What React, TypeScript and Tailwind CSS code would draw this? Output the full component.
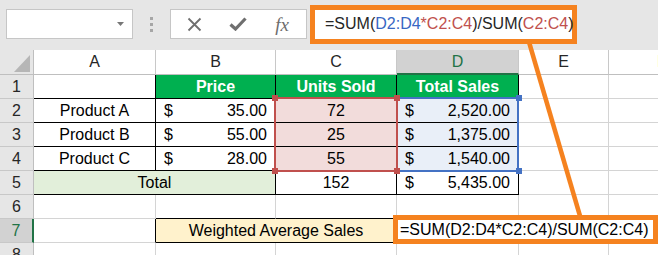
import React from 'react';

// border colour tokens for the sheet cells (right / bottom edges)
const rG = 'border-r-[#d4d4d4]';
const rK = 'border-r-black';
const bG = 'border-b-[#d4d4d4]';
const bK = 'border-b-black';

interface CellProps {
  r?: string;
  b?: string;
  className?: string;
  children?: React.ReactNode;
}

const Cell: React.FC<CellProps> = ({ r = rG, b = bG, className = '', children }) => (
  <div className={`flex h-[24px] items-center border-r border-b px-[8px] ${r} ${b} ${className}`}>{children}</div>
);

const Money: React.FC<{ value: string; className?: string }> = ({ value, className = '' }) => (
  <Cell r={rK} b={bK} className={`justify-between ${className}`}>
    <span>$</span>
    <span>{value}</span>
  </Cell>
);

const RowHead: React.FC<{ n: number; active?: boolean }> = ({ n, active }) => (
  <div
    className={`flex h-[24px] items-center justify-center border-b border-b-[#c8c8c8] ${
      active
        ? 'border-r-2 border-r-[#217346] bg-[#d2d2d2] text-[#217346]'
        : 'border-r border-r-[#bfbfbf] bg-[#e6e6e6] text-[#262626]'
    }`}
  >
    {n}
  </div>
);

const ColHead: React.FC<{ label: string; active?: boolean }> = ({ label, active }) => (
  <div
    className={`flex h-[25px] items-center justify-center border-r border-r-[#c8c8c8] ${
      active ? 'border-b-2 border-b-[#217346] bg-[#d2d2d2] text-[#217346]' : 'border-b border-b-[#bfbfbf] text-[#262626]'
    }`}
  >
    {label}
  </div>
);

const Handle: React.FC<{ x: number; y: number; color: string }> = ({ x, y, color }) => (
  <div className="absolute h-[6px] w-[6px]" style={{ left: x - 3, top: y - 3, backgroundColor: color }} />
);

const products = [
  { name: 'Product A', price: '35.00', units: '72', total: '2,520.00' },
  { name: 'Product B', price: '55.00', units: '25', total: '1,375.00' },
  { name: 'Product C', price: '28.00', units: '55', total: '1,540.00' },
];

export default function App() {
  return (
    <div className="relative h-[255px] w-[658px] overflow-hidden bg-[#e6e6e6] font-['Liberation_Sans',Arial,sans-serif] text-[16px] text-black">
      {/* formula bar */}
      <div className="flex h-[50px] items-center pb-[2px] pl-[6px]">
        <div className="flex h-[30px] w-[127px] items-center justify-end border border-[#c6c6c6] bg-white pr-[8px]">
          <svg width="7" height="4" viewBox="0 0 7 4">
            <path d="M0 0H7L3.5 4Z" fill="#777" />
          </svg>
        </div>
        <div className="ml-[17px] flex flex-col gap-[3px]">
          <div className="h-[3px] w-[3px] bg-[#a6a6a6]" />
          <div className="h-[3px] w-[3px] bg-[#a6a6a6]" />
          <div className="h-[3px] w-[3px] bg-[#a6a6a6]" />
        </div>
        <div className="ml-[17px] flex h-[30px] w-[137px] items-center border border-[#c6c6c6] bg-white pl-[1px]">
          <div className="flex w-[44px] justify-center">
            <svg width="15" height="15" viewBox="0 0 15 15">
              <path d="M1.5 1.5L13.5 13.5M13.5 1.5L1.5 13.5" stroke="#6f6f6f" strokeWidth="1.8" />
            </svg>
          </div>
          <div className="flex w-[44px] justify-center">
            <svg width="18" height="14" viewBox="0 0 18 14">
              <path d="M1.5 7.5L6.5 12L16.5 1.5" stroke="#6f6f6f" strokeWidth="3.2" fill="none" />
            </svg>
          </div>
          <div className="flex w-[44px] justify-center font-['Liberation_Serif',serif] text-[19px] italic leading-none text-[#6d6d6d]">
            fx
          </div>
        </div>
        <div className="ml-[3px] flex h-[39px] w-[267px] items-center border-[5px] border-[#f5821f] bg-white pl-[10px] text-[16px] text-[#262626]">
          <span>=SUM(</span>
          <span className="text-[#3867c3]">D2:D4</span>
          <span className="text-[#c0504d]">*C2:C4</span>
          <span>)/SUM(</span>
          <span className="text-[#c0504d]">C2:C4</span>
          <span>)</span>
        </div>
      </div>

      {/* sheet */}
      <div className="grid w-[764px] grid-cols-[34px_122px_120px_121px_122px_90px_155px] bg-white">
        <div className="relative h-[25px] border-r border-b border-r-[#bfbfbf] border-b-[#bfbfbf] bg-[#e6e6e6]">
          <svg className="absolute right-[3px] bottom-[2px]" width="16" height="17" viewBox="0 0 16 17">
            <path d="M16 0V17H0Z" fill="#b6b6b6" />
          </svg>
        </div>
        <ColHead label="A" />
        <ColHead label="B" />
        <ColHead label="C" />
        <ColHead label="D" active />
        <ColHead label="E" />
        <div className="flex h-[25px] items-center border-b border-b-[#bfbfbf] pl-[48px] text-[#262626]">F</div>

        <RowHead n={1} />
        <Cell r={rK} b={bK} />
        <Cell r={rK} b={bK} className="justify-center bg-[#00b050] font-bold text-white">Price</Cell>
        <Cell r={rK} b={bK} className="justify-center bg-[#00b050] font-bold text-white">Units Sold</Cell>
        <Cell r={rK} b={bK} className="justify-center bg-[#00b050] font-bold text-white">Total Sales</Cell>
        <Cell />
        <Cell />

        {products.map((p, i) => (
          <React.Fragment key={p.name}>
            <RowHead n={i + 2} />
            <Cell r={rK} b={bK} className="justify-center">{p.name}</Cell>
            <Money value={p.price} />
            <Cell r={rK} b={bK} className="justify-center bg-[#f2dcdb]">{p.units}</Cell>
            <Money value={p.total} className="bg-[#e9eff8]" />
            <Cell />
            <Cell />
          </React.Fragment>
        ))}

        <RowHead n={5} />
        <Cell r={rK} b={bK} className="col-span-2 justify-center bg-[#e2efda]">Total</Cell>
        <Cell r={rK} b={bK} className="justify-center">152</Cell>
        <Money value="5,435.00" />
        <Cell />
        <Cell />

        <RowHead n={6} />
        <Cell />
        <Cell b={bK} />
        <Cell b={bK} />
        <Cell />
        <Cell />
        <Cell />

        <RowHead n={7} active />
        <Cell r={rK} />
        <Cell r={rK} b={bK} className="col-span-2 justify-center bg-[#fff2cc]">Weighted Average Sales</Cell>
        <Cell />
        <Cell />
        <Cell />

        <RowHead n={8} />
        <Cell />
        <Cell />
        <Cell />
        <Cell />
        <Cell />
        <Cell />
      </div>

      {/* reference highlights */}
      <div className="absolute top-[97px] left-[396px] h-[75px] w-[123px] border-2 border-[#4472c4]" />
      <div className="absolute top-[97px] left-[274px] h-[75px] w-[124px] border-2 border-[#c0504d]" />
      <Handle x={519} y={98} color="#4472c4" />
      <Handle x={519} y={171} color="#4472c4" />
      <Handle x={275} y={98} color="#c0504d" />
      <Handle x={397} y={98} color="#c0504d" />
      <Handle x={275} y={171} color="#c0504d" />
      <Handle x={397} y={171} color="#c0504d" />

      {/* callout */}
      <svg className="pointer-events-none absolute top-0 left-0" width="658" height="255">
        <line x1="529" y1="42" x2="580" y2="216" stroke="#f5821f" strokeWidth="4.5" />
      </svg>
      <div className="absolute top-[215px] left-[393px] flex h-[29px] w-[265px] items-center border-[5px] border-[#f5821f] bg-white pl-[2px] text-[16px] text-black">
        =SUM(D2:D4*C2:C4)/SUM(C2:C4)
      </div>
    </div>
  );
}
